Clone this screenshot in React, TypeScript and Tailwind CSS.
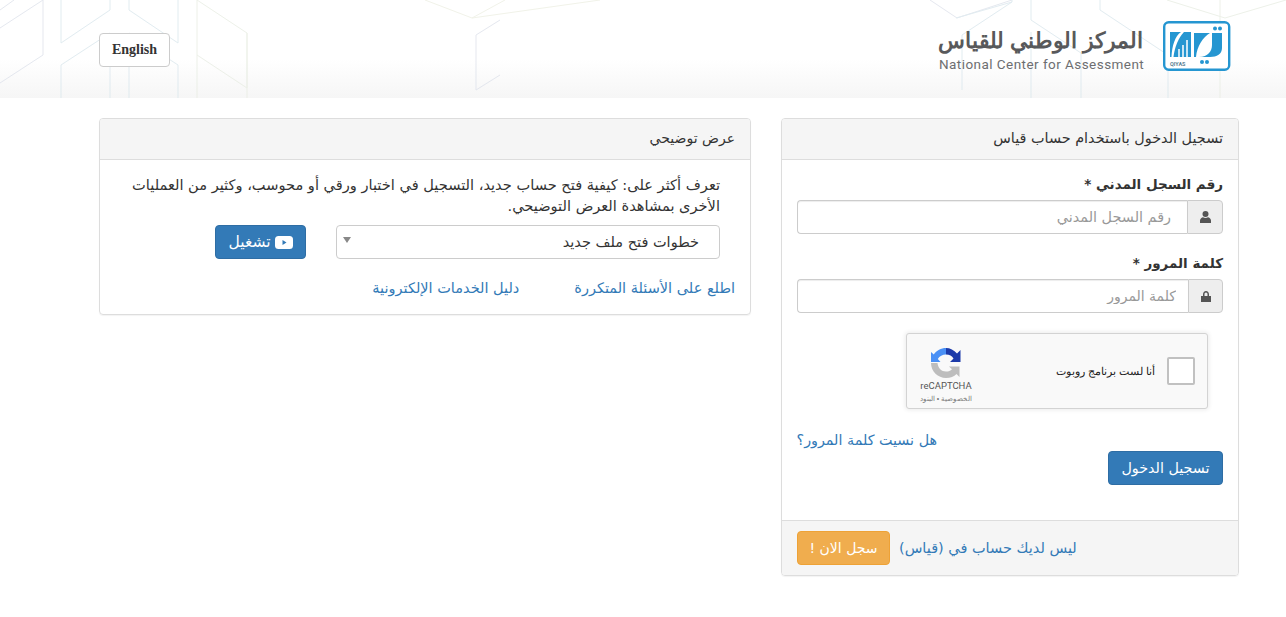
const arabic = "font-['DejaVu_Sans',sans-serif]";

const HeaderPattern = () => (
  <svg className="absolute inset-0 h-full w-full opacity-80" viewBox="0 0 1286 98" preserveAspectRatio="none" fill="none" strokeWidth="1">
    <g stroke="#dfe3ec">
      <path d="M0 28L43 0M0 10L14 0M43 0V55L0 83" />
      <path d="M425 0L472 18L505 0M600 0L472 18" stroke="#eef0e4" />
      <path d="M930 0L957 18L1012 0" />
      <path d="M476 35V90L500 75M476 35L500 20" />
    </g>
    <g stroke="#dbe8ee">
      <path d="M61 0V43L110 10V0M61 98V65L110 33V98M129 0V10L178 43V0M129 98V33L178 65V98" />
      <path d="M1012 0V2L956 18M1031 0V20L1081 53V98M1031 98V32M1100 0V10L1168 55V98" />
      <path d="M962 90V35L1012 2" />
    </g>
    <g stroke="#e9eee4">
      <path d="M197 0V55L247 88V33L197 0M197 55V98M247 33V98" />
      <path d="M1167 0L1225 18L1286 0M1220 0V98" />
    </g>
  </svg>
);

const QiyasLogo = () => (
  <svg dir="ltr" width="68" height="50" viewBox="0 0 68 50" fill="none">
    <rect x="1.200" y="1.200" width="65" height="47.500" rx="4.500" fill="#fff" stroke="#2596d1" strokeWidth="2.400" />
    <path d="M7 11H18C12 15 9 25 8.500 36H7Z" fill="#2596d1" />
    <path d="M21 11H28V36H10.500C11.500 27 15 17 21 11Z" fill="#2596d1" />
    <path d="M16 36V28M20 36V24M24 36V19" stroke="#fff" strokeWidth="1.500" />
    <path d="M31 12H47C40 16 34 25 33 36H31Z" fill="#2596d1" />
    <path d="M49 12H59V27C59 33 54 36 47 36H36C45 36 49 30 49 24Z" fill="#2596d1" />
    <circle cx="52" cy="7.500" r="2" fill="#2596d1" />
    <circle cx="57" cy="7.500" r="2" fill="#2596d1" />
    <circle cx="39" cy="41" r="2" fill="#2596d1" />
    <circle cx="44" cy="41" r="2" fill="#2596d1" />
    <text x="7" y="45" direction="ltr" fontSize="5.500" fontWeight="700" fontFamily="Roboto, sans-serif" fill="#5b7f93">QIYAS</text>
  </svg>
);

const RecaptchaIcon = () => (
  <svg width="32" height="32" viewBox="0 0 32 32" fill="none">
    <path d="M16 1C11 1 6.500 3.500 3.800 7.500L1 5V15H10.500L7.800 12C9.500 9 12.500 7.500 16 7.500Z" fill="#4a90f5" />
    <path d="M16 1C20 1 24 3 27 6.500L30.500 3V15H20L23.500 11.500C22 9 19.500 7.500 16 7.500Z" fill="#1c3aa9" />
    <path d="M1 16H7.500C8 21 11.500 24.500 16 24.500C18.500 24.500 20.500 23.700 22 22.200L19 19.500H29.500V30L26.500 27C24 29.500 20.500 31 16 31C8 31 1 24.500 1 16Z" fill="#bdbdbd" />
  </svg>
);

export default function App() {
  return (
    <div dir="rtl" className={`min-h-[617px] bg-white text-[14.500px] leading-5 text-[#333] ${arabic}`}>
      {/* Header */}
      <header className="relative flex h-[98px] items-start justify-between overflow-hidden bg-gradient-to-b from-white from-60% to-[#f6f6f6] pr-[55px] pl-[99px]">
        <HeaderPattern />
        <div className="relative mt-[21px] flex items-start gap-5">
          <QiyasLogo />
          <div className="flex w-[204px] flex-col">
            <div className="h-[36px] font-['Liberation_Sans',sans-serif] text-[22px] leading-[40px] font-bold whitespace-nowrap text-[#58595b]">
              المركز الوطني للقياس
            </div>
            <div dir="ltr" className="font-['Roboto',sans-serif] text-[13.500px] leading-[14px] tracking-[0.45px] whitespace-nowrap text-[#6d6e71]">
              National Center for Assessment
            </div>
          </div>
        </div>
        <button dir="ltr" className="relative mt-[33px] h-[34px] w-[71px] rounded border border-[#ccc] bg-white font-['Liberation_Serif',serif] text-sm font-bold text-[#333]">
          English
        </button>
      </header>

      <main className="flex items-start gap-[30px] pt-5 pr-[47px] pl-[99px]">
        {/* Login panel */}
        <section className="w-[458px] overflow-hidden rounded border border-[#ddd] shadow-[0_1px_1px_rgba(0,0,0,0.05)]">
          <h2 className="h-[41px] border-b border-[#ddd] bg-[#f5f5f5] px-[15px] text-[14.400px] leading-[38px] font-normal">
            تسجيل الدخول باستخدام حساب قياس
          </h2>
          <div className="h-[360px] px-[15px] pt-[14px]">
            <label className="block h-[26px] text-[13.500px] leading-5 font-bold">رقم السجل المدني *</label>
            <div className="flex h-[34px]">
              <span className="flex w-[36px] items-center justify-center rounded-r border border-[#ccc] bg-[#eee] text-[#555]">
                <svg width="11" height="12" viewBox="0 0 11 12" fill="currentColor">
                  <circle cx="5.500" cy="3" r="3" />
                  <path d="M0 12V9.500C0 7.500 2 6.500 3 6.300C4.500 7.300 6.500 7.300 8 6.300C9 6.500 11 7.500 11 9.500V12Z" />
                </svg>
              </span>
              <input
                placeholder="رقم السجل المدني"
                className="min-w-0 flex-1 rounded-l border border-r-0 border-[#ccc] pr-[16px] pl-3 text-[14.400px] shadow-[inset_0_1px_1px_rgba(0,0,0,0.075)] placeholder:text-[#999]"
              />
            </div>
            <label className="mt-[19px] block h-[26px] text-[13.500px] leading-5 font-bold">كلمة المرور *</label>
            <div className="flex h-[34px]">
              <span className="flex w-[35px] items-center justify-center rounded-r border border-[#ccc] bg-[#eee] text-[#555]">
                <svg width="10" height="11" viewBox="0 0 10 11" fill="currentColor">
                  <path d="M2 5V3.200C2 1.500 3.300 0 5 0C6.700 0 8 1.500 8 3.200V5H10V11H0V5ZM3.500 5H6.500V3.200C6.500 2.300 5.900 1.500 5 1.500C4.100 1.500 3.500 2.300 3.500 3.200Z" />
                </svg>
              </span>
              <input
                type="text"
                placeholder="كلمة المرور"
                className="min-w-0 flex-1 rounded-l border border-r-0 border-[#ccc] px-3 text-sm shadow-[inset_0_1px_1px_rgba(0,0,0,0.075)] placeholder:text-[#999]"
              />
            </div>

            {/* reCAPTCHA */}
            <div className="mt-5 mr-[15px] flex h-[76px] w-[302px] items-center rounded-[3px] border border-[#d3d3d3] bg-[#f9f9f9] pr-[12px] pl-[10px] shadow-[0_0_4px_1px_rgba(0,0,0,0.08)]">
              <span className="h-7 w-7 shrink-0 rounded-[2px] border-2 border-[#c1c1c1] bg-white" />
              <span className="mr-3 flex-1 font-['Liberation_Sans',sans-serif] text-[11.200px] whitespace-nowrap text-[#222]">
                أنا لست برنامج روبوت
              </span>
              <div className="flex w-[58px] flex-col items-center pt-[9px]">
                <RecaptchaIcon />
                <span dir="ltr" className="font-['Roboto',sans-serif] text-[9.500px] leading-[14px] text-[#555]">reCAPTCHA</span>
                <span className="font-['Liberation_Sans',sans-serif] text-[7px] leading-[12px] whitespace-nowrap text-[#777]">الخصوصية • البنود</span>
              </div>
            </div>

            <div className="mt-[21px] flex justify-end">
              <a className="h-5 w-[140px] text-[14.300px] whitespace-nowrap text-[#337ab7]">هل نسيت كلمة المرور؟</a>
            </div>
            <button className="mt-[1px] block h-[34px] w-[115px] rounded border border-[#2e6da4] bg-[#337ab7] text-[14.300px] text-white">
              تسجيل الدخول
            </button>
          </div>
          <footer className="flex h-[55px] items-center justify-end gap-[9px] border-t border-[#ddd] bg-[#f5f5f5] px-[15px]">
            <span className="text-[#337ab7]">ليس لديك حساب في (قياس)</span>
            <button className="h-[34px] w-[93px] rounded border border-[#eea236] bg-[#f0ad4e] text-sm text-white">
              سجل الان !
            </button>
          </footer>
        </section>

        {/* Demo panel */}
        <section className="w-[652px] overflow-hidden rounded border border-[#ddd] shadow-[0_1px_1px_rgba(0,0,0,0.05)]">
          <h2 className="h-[41px] border-b border-[#ddd] bg-[#f5f5f5] px-[15px] text-sm leading-[38px] font-normal">
            عرض توضيحي
          </h2>
          <div className="h-[154px] pt-[14px] pr-[15px]">
            <div className="pr-[15px] pl-[15px]">
              <p className="w-[592px] text-[14.600px] leading-[21px]">
                تعرف أكثر على: كيفية فتح حساب جديد، التسجيل في اختبار ورقي أو محوسب، وكثير من العمليات الأخرى بمشاهدة العرض التوضيحي.
              </p>
              <div className="mt-[9px] flex gap-[30px]">
                <div className="relative flex h-[34px] w-[384px] items-center rounded border border-[#ccc] bg-white pr-[20px]">
                  <span>خطوات فتح ملف جديد</span>
                  <span className="absolute top-[11px] left-[6px] border-x-[4px] border-t-[6px] border-x-transparent border-t-[#888]" />
                </div>
                <button className="flex h-[34px] w-[91px] items-center justify-center gap-1 rounded border border-[#2e6da4] bg-[#337ab7] text-[15.500px] text-white">
                  <svg width="18" height="13" viewBox="0 0 18 13">
                    <rect width="18" height="13" rx="3.500" fill="#fff" />
                    <path d="M7.500 4L11.500 6.500L7.500 9Z" fill="#337ab7" />
                  </svg>
                  <span>تشغيل</span>
                </button>
              </div>
            </div>
            <div className="mt-[19px] flex gap-[55px] text-[#337ab7]">
              <a>اطلع على الأسئلة المتكررة</a>
              <a>دليل الخدمات الإلكترونية</a>
            </div>
          </div>
        </section>
      </main>
    </div>
  );
}
